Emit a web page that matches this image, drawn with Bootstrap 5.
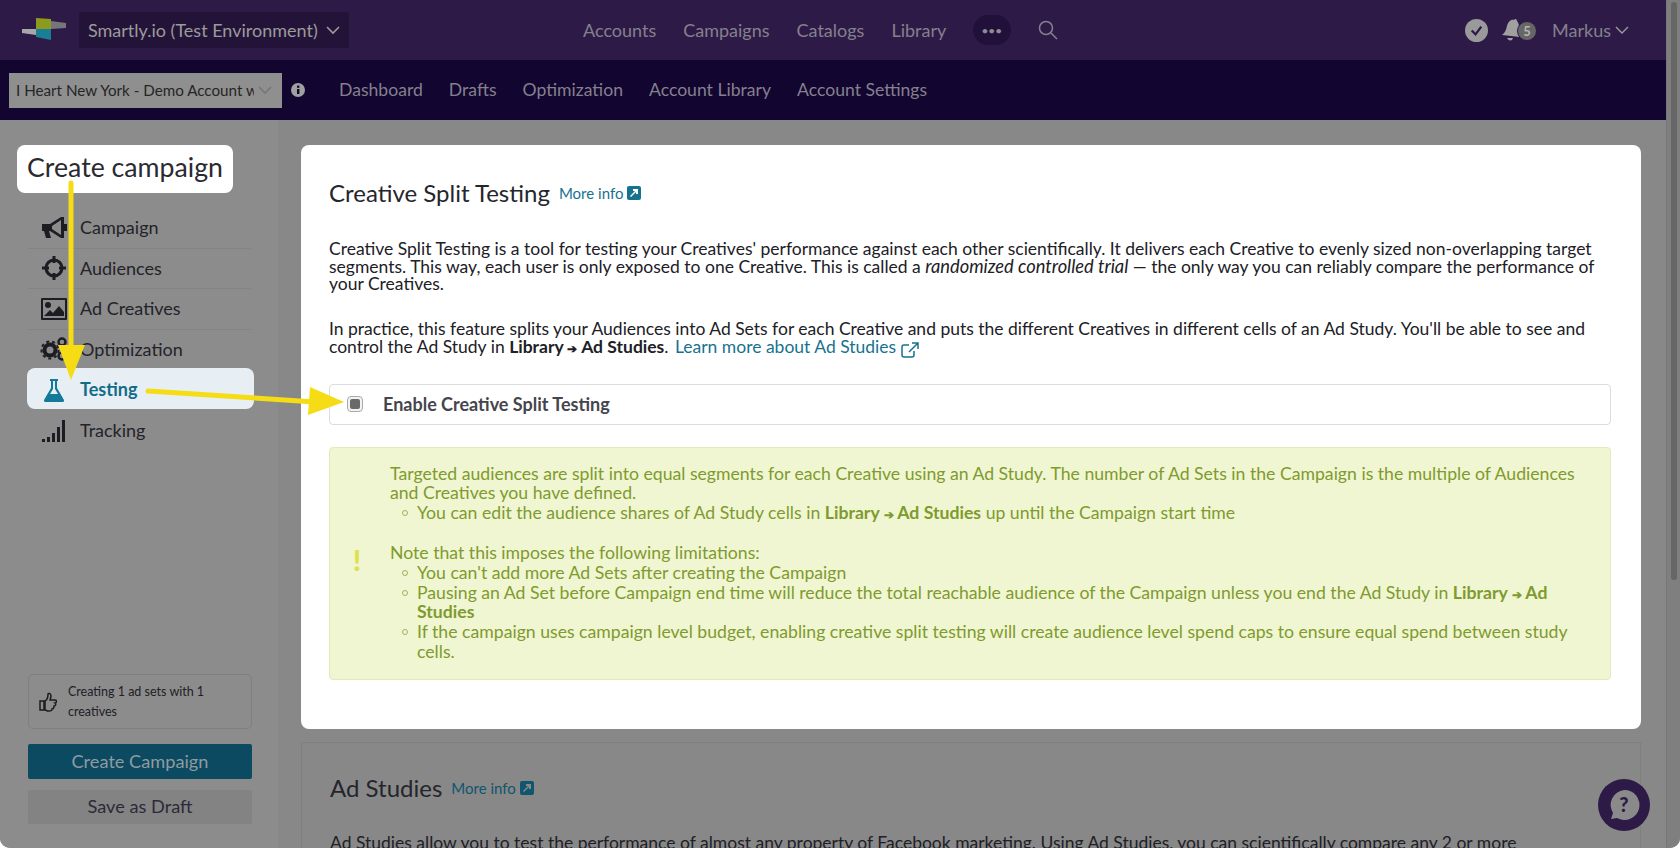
<!DOCTYPE html>
<html lang="en">
<head>
    <meta charset="UTF-8">
    <title>Creative Split Testing</title>
    <link href="https://cdn.jsdelivr.net/npm/bootstrap@5.3.0/dist/css/bootstrap.min.css" rel="stylesheet">
    <style>
        html { background: #fff; }
        body { height: 848px; overflow: hidden; background: #888; font-family: "Lato", "Liberation Sans", sans-serif; font-size: 17.5px; color: #202026; border-radius: 0 0 10px 10px; position: relative; }
        .page-shell { width: 1667px; height: 848px; border-right: 1px solid #777; overflow: hidden; }
        .top-bar { height: 60px; background: #2e1a47; padding-left: 22px; padding-right: 37px; }
        .sub-bar { height: 60px; background: #120530; padding-left: 9px; }
        .top-link { color: #85808d; text-decoration: none; font-size: 18px; white-space: nowrap; }
        .brand-box { background: #241338; color: #9b9b9b; font-size: 18px; height: 36px; width: 270px; flex: none; white-space: nowrap; padding-left: 9px; border-radius: 2px; margin-left: 13px; }
        .main-links { margin-left: 234px; gap: 27px; }
        .dots-pill { width: 38px; height: 30px; border-radius: 15px; background: #20103a; color: #8f8a97; letter-spacing: 1px; font-size: 10px; font-weight: 900; }
        .user-links .bell-wrap { margin: 0 15px 0 13px; }
        .account-pick { width: 273px; height: 35px; flex: none; background: #8f8f8f; color: #252525; font-size: 15.2px; padding: 0 7px; white-space: nowrap; overflow: hidden; }
        .account-pick span { width: 238px; overflow: hidden; flex: none; }
        .pick-info { margin-left: 9px; flex: none; }
        .sub-links { gap: 26px; margin-left: 34px; }
        .sub-links .top-link { font-size: 17.6px; }
        .content-wrap { height: 728px; overflow: hidden; }
        .side-col { width: 278px; flex: none; padding: 0 26px 0 28px; background: #8c8c8c; height: 728px; }
        .side-rows { margin-top: 88px; }
        .side-row { height: 40.5px; border-bottom: 1px solid #838383; color: #23232a; font-size: 18px; margin-right: 1px; }
        .side-row svg { width: 28px; height: 28px; margin: 0 12px 0 12px; flex: none; fill: #1c1c22; }
        .side-row.is-active { background: #e8eff4; color: #116c8a; font-weight: 700; border: 0; border-radius: 8px; height: 41px; margin: -2px -2px 1.5px -1px; padding-top: 2px; }
        .side-row.is-active svg { fill: #137a99; margin-left: 13px; }
        .side-row.no-line { border-bottom: 0; }
        .info-box { height: 55px; border: 1px solid #7f7f7f; border-radius: 5px; font-size: 12.5px; line-height: 20px; padding: 0 8px 0 10px; gap: 11px; color: #202026; }
        .create-btn { height: 35px; background: #0b4a60; color: #8f9ba1; font-size: 18.2px; border-radius: 2px; margin-top: 15px; }
        .draft-btn { height: 34px; background: #838383; color: #2c2a3a; font-size: 18.2px; border-radius: 2px; margin: 11px 0 24px; }
        .main-col { padding: 25px 26px 0 23px; width: 1389px; }
        .white-card { height: 584px; background: #fff; border-radius: 8px; padding: 0 28px; }
        .sec-title { font-size: 24px; font-weight: 400; margin: 0; color: #25252c; }
        .more-link { color: #17728f; font-size: 15px; text-decoration: none; margin-left: 9px; white-space: nowrap; }
        .ext-box { width: 14px; height: 14px; fill: #17728f; vertical-align: -1px; }
        .card-head { padding-top: 33px; height: 95px; }
        .head-line { height: 30px; }
        .body-text { line-height: 17.7px; margin: 0 0 27px; width: 1288px; }
        .body-text em { font-size: 18.3px; }
        .learn-link { color: #17728f; text-decoration: none; margin-left: 2px; }
        .learn-link svg { margin: -4px 0; vertical-align: -1px; }
        .enable-row { width: 1282px; height: 41px; border: 1px solid #dcdcdc; border-radius: 4px; margin-top: 28px; padding-left: 17px; font-weight: 700; font-size: 18px; color: #45454c; }
        .fake-check { width: 16px; height: 16px; border: 1px solid #aaa; border-radius: 4px; margin-right: 20px; background: #f2f2f2; }
        .fake-check i { width: 10px; height: 10px; background: #6a6a6a; border-radius: 2px; display: block; }
        .arrow-mark { font-size: .7em; line-height: 0; }
        .green-box { width: 1282px; height: 233px; margin-top: 22px; background: #f0f6d2; border: 1px solid #e2eab8; border-radius: 4px; color: #7f9a2e; font-size: 17.65px; line-height: 19.8px; padding: 16px 30px 0 60px; position: relative; }
        .green-box ul { list-style: none; margin: 0; padding: 0 0 0 27px; }
        .green-box li { position: relative; }
        .green-box li::before { content: ""; position: absolute; left: -15px; top: 7px; width: 6px; height: 6px; border: 1px solid #9fb35a; border-radius: 50%; }
        .green-box p { margin: 0; }
        .green-box .gap-top { margin-top: 20px; }
        .bang-mark { position: absolute; left: 23px; top: 98px; color: #dfe04a; font-size: 28px; font-weight: 900; line-height: 1; }
        .dim-panel { height: 160px; margin-top: 13px; border: 1px solid #808080; border-bottom: 0; padding: 30px 28px 0; }
        .dim-panel .more-link { color: #0f566e; }
        .dim-panel .ext-box { fill: #0f566e; }
        .dim-panel p { margin-top: 31px; width: 1288px; line-height: 17.6px; }
        .draw-layer { position: absolute; left: 0; top: 0; pointer-events: none; }
        .campaign-tag { position: absolute; left: 17px; top: 145px; width: 216px; height: 48px; padding-bottom: 3px; background: #fff; border-radius: 8px; font-size: 26.7px; color: #2a2a30; }
        .help-bubble { position: absolute; left: 1598px; top: 779px; width: 52px; height: 52px; border-radius: 50%; background: #2e1a47; }
        .scroll-track { position: absolute; right: 0; top: 0; width: 13px; height: 848px; background: #7f7f7f; }
        .scroll-thumb { position: absolute; left: 4px; top: 2px; width: 6px; height: 578px; border-radius: 3px; background: #666; }
    </style>
</head>
<body>
    <div class="page-shell">
        <div class="top-bar d-flex align-items-center">
            <svg width="44" height="24" viewBox="0 0 44 24" class="flex-shrink-0">
                <polygon points="0,11 14,11 14,17 0,15" fill="#a8a8a8"/>
                <polygon points="14,0 29,1 29,11 14,11" fill="#8c9a1e"/>
                <polygon points="29,3 44,5 44,10 29,11" fill="#77757c"/>
                <polygon points="14,11 29,11 29,22 14,19" fill="#197f95"/>
            </svg>
            <div class="brand-box d-flex align-items-center">
                Smartly.io (Test Environment)
                <svg class="ms-2" width="14" height="9" viewBox="0 0 14 9"><path d="M1 1l6 6 6-6" fill="none" stroke="#9b9b9b" stroke-width="1.6"/></svg>
            </div>
            <div class="main-links d-flex align-items-center">
                <a class="top-link" href="#">Accounts</a>
                <a class="top-link" href="#">Campaigns</a>
                <a class="top-link" href="#">Catalogs</a>
                <a class="top-link" href="#">Library</a>
                <span class="dots-pill d-flex align-items-center justify-content-center">•••</span>
                <svg width="20" height="20" viewBox="0 0 20 20"><circle cx="8" cy="8" r="6.5" fill="none" stroke="#85808d" stroke-width="1.5"/><path d="M13 13l6 6" stroke="#85808d" stroke-width="1.5"/></svg>
            </div>
            <div class="user-links d-flex align-items-center ms-auto">
                <svg width="23" height="23" viewBox="0 0 24 24"><circle cx="12" cy="12" r="12" fill="#9a9a9a"/><path d="M7 12l4 4 6-8" fill="none" stroke="#2e1a47" stroke-width="2.4"/></svg>
                <svg class="bell-wrap" width="36" height="24" viewBox="0 0 36 24"><path d="M1 17c3-2 4-5 5-9s4-7 7-6c1-2 3-1 3 1 2 2 2 5 2 9l1 7z" fill="#a0a0a0"/><path d="M6 20c1 2 3 3 5 2l1-2z" fill="#a0a0a0"/><circle cx="26" cy="13" r="9.5" fill="#666" stroke="#2e1a47"/><text x="26" y="18" font-size="13" font-weight="700" text-anchor="middle" fill="#b5b5b5">5</text></svg>
                <a class="top-link me-1" href="#">Markus</a>
                <svg width="14" height="9" viewBox="0 0 14 9"><path d="M1 1l6 6 6-6" fill="none" stroke="#9b9b9b" stroke-width="1.4"/></svg>
            </div>
        </div>
        <div class="sub-bar d-flex align-items-center">
            <div class="account-pick d-flex align-items-center">
                <span>I Heart New York - Demo Account with data</span>
                <svg class="ms-1" width="14" height="9" viewBox="0 0 14 9"><path d="M1 1l6 6 6-6" fill="none" stroke="#777" stroke-width="1.6"/></svg>
            </div>
            <svg class="pick-info" width="14" height="14" viewBox="0 0 14 14"><circle cx="7" cy="7" r="7" fill="#a0a0a0"/><rect x="6" y="6" width="2.4" height="5" fill="#120530"/><rect x="6" y="2.6" width="2.4" height="2.2" fill="#120530"/></svg>
            <div class="sub-links d-flex align-items-center">
                <a class="top-link" href="#">Dashboard</a>
                <a class="top-link" href="#">Drafts</a>
                <a class="top-link" href="#">Optimization</a>
                <a class="top-link" href="#">Account Library</a>
                <a class="top-link" href="#">Account Settings</a>
            </div>
        </div>
        <div class="content-wrap d-flex">
            <div class="side-col d-flex flex-column">
                <div class="side-rows">
                    <div class="side-row d-flex align-items-center">
                        <svg viewBox="0 0 28 28"><path d="M2 10h8l11-7h3v21h-3l-11-7H9l2 7H6l-2-7H2zM21 6l-9 6v3l9 6z"/><rect x="24" y="10" width="3" height="7"/></svg>
                        Campaign
                    </div>
                    <div class="side-row d-flex align-items-center">
                        <svg viewBox="0 0 28 28"><circle cx="14" cy="14" r="8" fill="none" stroke="#1c1c22" stroke-width="3"/><rect x="12.5" y="2" width="3" height="7"/><rect x="12.5" y="19" width="3" height="7"/><rect x="2" y="12.5" width="7" height="3"/><rect x="19" y="12.5" width="7" height="3"/></svg>
                        Audiences
                    </div>
                    <div class="side-row d-flex align-items-center">
                        <svg viewBox="0 0 28 28"><path d="M2 3h24a1 1 0 0 1 1 1v20a1 1 0 0 1-1 1H2a1 1 0 0 1-1-1V4a1 1 0 0 1 1-1zm1 2v18h22V5z"/><circle cx="8" cy="10" r="3"/><path d="M4 21l6-6 3 3 6-7 5 6v4z"/></svg>
                        Ad Creatives
                    </div>
                    <div class="side-row d-flex align-items-center">
                        <svg viewBox="0 0 28 28"><circle cx="10" cy="15" r="5.5" fill="none" stroke="#1c1c22" stroke-width="4"/><circle cx="10" cy="15" r="8.5" fill="none" stroke="#1c1c22" stroke-width="2" stroke-dasharray="3 3"/><circle cx="22" cy="7" r="3.5" fill="none" stroke="#1c1c22" stroke-width="2.4"/><circle cx="22" cy="21" r="3.5" fill="none" stroke="#1c1c22" stroke-width="2.4"/></svg>
                        Optimization
                    </div>
                    <div class="side-row is-active d-flex align-items-center">
                        <svg viewBox="0 0 28 28"><path d="M10 3h8v2h-1v7l7 12a1.5 1.5 0 0 1-1 2H5a1.5 1.5 0 0 1-1-2l7-12V5h-1zm3 2v8l-3 5h8l-3-5V5z"/><path d="M8 18h12l3 6H5z"/></svg>
                        Testing
                    </div>
                    <div class="side-row no-line d-flex align-items-center">
                        <svg viewBox="0 0 28 28"><rect x="2" y="22" width="3" height="3"/><rect x="7" y="20" width="3" height="5"/><rect x="12" y="16" width="3" height="9"/><rect x="17" y="10" width="3" height="15"/><rect x="22" y="3" width="3" height="22"/></svg>
                        Tracking
                    </div>
                </div>
                <div class="info-box d-flex align-items-center mt-auto">
                    <svg width="18" height="20" viewBox="0 0 18 20" class="flex-shrink-0"><path d="M1 9h4v9H1zM6 9c2-1 3-4 3-7 0-1 3-1 3 2 0 2-1 3-1 4h5c2 0 2 3 0 3 1 1 1 3-1 3 0 2-1 3-2 3 0 2-1 2-3 2H9c-1 0-2-1-3-1z" fill="none" stroke="#1c1c22" stroke-width="1.5"/></svg>
                    <span>Creating 1 ad sets with 1 creatives</span>
                </div>
                <div class="create-btn d-flex align-items-center justify-content-center">Create Campaign</div>
                <div class="draft-btn d-flex align-items-center justify-content-center">Save as Draft</div>
            </div>
            <div class="main-col">
                <div class="white-card">
                    <div class="card-head">
                        <div class="head-line d-flex align-items-center">
                            <h2 class="sec-title">Creative Split Testing</h2>
                            <a class="more-link" href="#">More info <svg class="ext-box" viewBox="0 0 14 14"><path d="M2 0h10a2 2 0 0 1 2 2v10a2 2 0 0 1-2 2H2a2 2 0 0 1-2-2V2a2 2 0 0 1 2-2zm4 3v2h2L3 10l1 1 5-5v2h2V3z"/></svg></a>
                        </div>
                    </div>
                    <p class="body-text">Creative Split Testing is a tool for testing your Creatives' performance against each other scientifically. It delivers each Creative to evenly sized non-overlapping target segments. This way, each user is only exposed to one Creative. This is called a <em>randomized controlled trial</em> — the only way you can reliably compare the performance of your Creatives.</p>
                    <p class="body-text mb-0">In practice, this feature splits your Audiences into Ad Sets for each Creative and puts the different Creatives in different cells of an Ad Study. You'll be able to see and control the Ad Study in <b>Library <span class="arrow-mark">➔</span> Ad Studies</b>. <a class="learn-link" href="#">Learn more about Ad Studies <svg width="18" height="16" viewBox="0 0 18 16"><path d="M13 9v4a2 2 0 0 1-2 2H3a2 2 0 0 1-2-2V5a2 2 0 0 1 2-2h5M11 1h6v6M17 1L8 10" fill="none" stroke="#17728f" stroke-width="1.5"/></svg></a></p>
                    <div class="enable-row d-flex align-items-center">
                        <span class="fake-check d-flex align-items-center justify-content-center"><i></i></span>
                        Enable Creative Split Testing
                    </div>
                    <div class="green-box">
                        <span class="bang-mark">!</span>
                        <p>Targeted audiences are split into equal segments for each Creative using an Ad Study. The number of Ad Sets in the Campaign is the multiple of Audiences and Creatives you have defined.</p>
                        <ul>
                            <li>You can edit the audience shares of Ad Study cells in <b>Library <span class="arrow-mark">➔</span> Ad Studies</b> up until the Campaign start time</li>
                        </ul>
                        <p class="gap-top">Note that this imposes the following limitations:</p>
                        <ul>
                            <li>You can't add more Ad Sets after creating the Campaign</li>
                            <li>Pausing an Ad Set before Campaign end time will reduce the total reachable audience of the Campaign unless you end the Ad Study in <b>Library <span class="arrow-mark">➔</span> Ad Studies</b></li>
                            <li>If the campaign uses campaign level budget, enabling creative split testing will create audience level spend caps to ensure equal spend between study cells.</li>
                        </ul>
                    </div>
                </div>
                <div class="dim-panel">
                    <div class="head-line d-flex align-items-center">
                        <h2 class="sec-title">Ad Studies</h2>
                        <a class="more-link" href="#">More info <svg class="ext-box" viewBox="0 0 14 14"><path d="M2 0h10a2 2 0 0 1 2 2v10a2 2 0 0 1-2 2H2a2 2 0 0 1-2-2V2a2 2 0 0 1 2-2zm4 3v2h2L3 10l1 1 5-5v2h2V3z"/></svg></a>
                    </div>
                    <p>Ad Studies allow you to test the performance of almost any property of Facebook marketing. Using Ad Studies, you can scientifically compare any 2 or more</p>
                </div>
            </div>
        </div>
    </div>
    <div class="scroll-track"><div class="scroll-thumb"></div></div>
    <div class="campaign-tag d-flex align-items-center justify-content-center">Create campaign</div>
    <svg class="draw-layer" width="1680" height="848" viewBox="0 0 1680 848">
        <path d="M71 183V350" stroke="#f5dc14" stroke-width="5" stroke-linecap="round"/>
        <polygon points="58,345 85,345 71,380" fill="#f5dc14"/>
        <path d="M148 391L315 402" stroke="#f5dc14" stroke-width="5" stroke-linecap="round"/>
        <polygon points="310,387 344,402 308,415" fill="#f5dc14"/>
    </svg>
    <div class="help-bubble d-flex align-items-center justify-content-center">
        <svg width="32" height="32" viewBox="0 0 32 32"><path d="M16 1a15 15 0 1 1-7 28l-6 1 2-6A15 15 0 0 1 16 1z" fill="#8a8a8a"/><text x="16" y="23" font-size="20" font-weight="900" text-anchor="middle" fill="#2e1a47" font-family="Lato">?</text></svg>
    </div>
    <script src="https://cdn.jsdelivr.net/npm/bootstrap@5.3.0/dist/js/bootstrap.bundle.min.js"></script>
</body>
</html>
